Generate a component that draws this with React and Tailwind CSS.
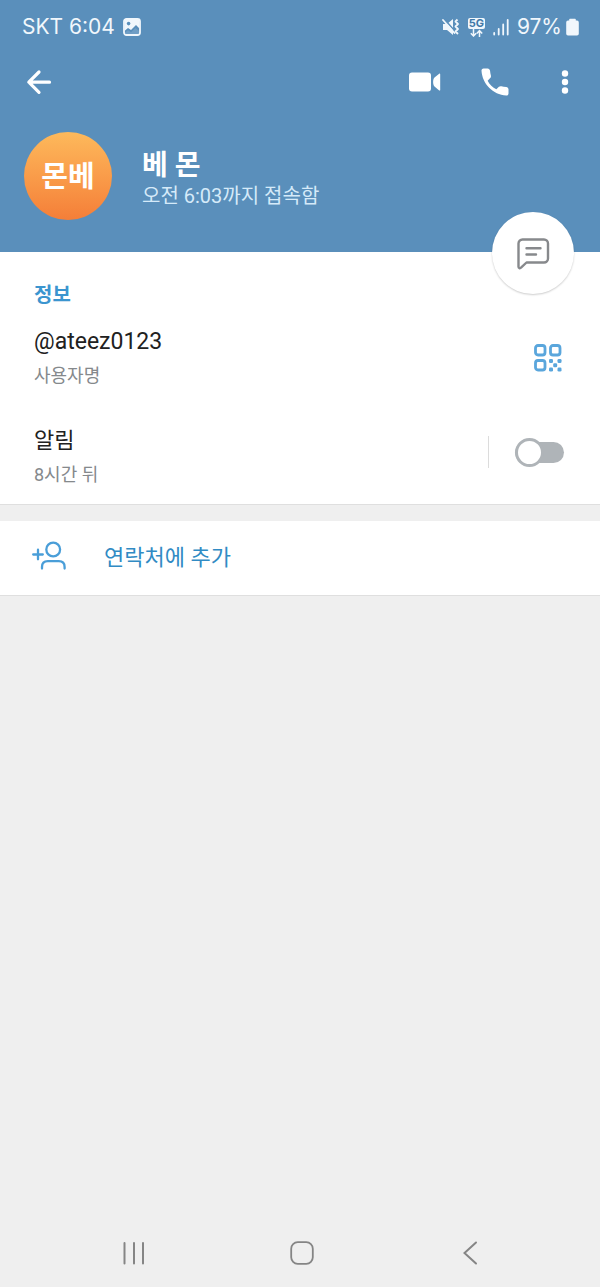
import React, { useState } from "react";

function ImageIcon() {
    return (
        <svg className="w-[18px] h-[18px]" viewBox="0 0 18 18" fill="none">
            <rect x="1" y="1" width="16" height="16" rx="2.5" stroke="currentColor" strokeWidth="1.8" />
            <path d="M1.500 1.500h15v9L13 7 8 12 5 10l-3.500 3z" fill="currentColor" />
            <circle cx="5.600" cy="5.600" r="1.800" fill="#5a8fbb" />
            <path d="M2 15.500v-2l3-2.700 2.700 2.200 4.800-5 3.500 3.500v4z" fill="#5a8fbb" />
            <path d="M2 14.500l3-2.200 3 2 4.500-4.200 3.500 3V16H2z" fill="currentColor" opacity=".15" />
        </svg>
    );
}

function MutedIcon() {
    return (
        <svg className="w-[18px] h-[18px]" viewBox="0 0 18 18" fill="none">
            <path d="M1 6h4l6-5v16l-6-5H1z" fill="currentColor" />
            <path d="M2 .8l11 12.400" stroke="#5a8fbb" strokeWidth="1.600" />
            <path d="M1 2l11.500 13" stroke="currentColor" strokeWidth="1.800" strokeLinecap="round" />
            <path
                d="M15.500 1.500l-2 2 2.500 2.500-2.500 2.500 2.500 2.500-2.500 2.500 2.500 2.500"
                stroke="currentColor"
                strokeWidth="1.800"
                strokeLinejoin="round"
            />
        </svg>
    );
}

function NetworkIcon() {
    return (
        <span className="flex flex-col items-center w-[17px]">
            <span className="w-full h-[11px] rounded-[2px] bg-[#f1f7fc] text-[#4079a8] text-[11px] leading-[11px] font-bold text-center">
                5G
            </span>
            <svg className="w-[13px] h-[8px]" viewBox="0 0 13 8" fill="none" stroke="currentColor" strokeWidth="1.500">
                <path d="M3.500 0v7M.8 4.200l2.700 2.800 2.700-2.800M9.500 8V1.500M6.800 4.400l2.700-2.800 2.700 2.800" />
            </svg>
        </span>
    );
}

function SignalIcon() {
    return (
        <svg className="w-[16px] h-[18px]" viewBox="0 0 16 18" fill="none" stroke="currentColor" strokeWidth="1.8" strokeLinecap="round">
            <path d="M1.2 15v1.500M5.700 11v5.500M10.200 6.500v10M14.700 2v14.500" />
        </svg>
    );
}

function BatteryIcon() {
    return (
        <svg className="w-[13px] h-[18px]" viewBox="0 0 13 18" fill="currentColor">
            <path d="M4 .8h5a.8.8 0 01.8.8v1H11a1.8 1.8 0 011.8 1.8v11.3a1.8 1.8 0 01-1.8 1.8H2A1.8 1.8 0 01.2 15.700V4.400A1.8 1.8 0 012 2.600h1.200v-1A.8.8 0 014 .8z" />
        </svg>
    );
}

function BackArrowIcon() {
    return (
        <svg className="w-[28px] h-[28px]" viewBox="0 0 28 28" fill="none" stroke="currentColor" strokeWidth="3.200" strokeLinecap="round" strokeLinejoin="round">
            <path d="M24.500 14.200H4M14 4L3.800 14.200 14 24.400" />
        </svg>
    );
}

function VideoIcon() {
    return (
        <svg className="w-[32px] h-[20px]" viewBox="0 0 32 20" fill="currentColor">
            <rect x="0" y=".5" width="22" height="19" rx="3" />
            <path d="M31.200 2.200v15.700c0 .6-.6.8-1 .5l-4.700-3.900c-1.800-1.500-1.800-7.400 0-8.900l4.700-3.900c.4-.3 1-.1 1 .5z" />
        </svg>
    );
}

function PhoneIcon() {
    return (
        <svg className="w-[36px] h-[36px]" viewBox="0 0 24 24" fill="currentColor">
            <path d="M19.500 15.300c-1.200-.1-2.300-.3-3.300-.5-.6-.1-1.200 0-1.600.4l-1.700 1.700c-2.500-1.300-4.500-3.300-5.800-5.800l1.700-1.700c.4-.4.600-1 .5-1.600-.3-1-.5-2.100-.6-3.300C8.600 3.700 7.900 3 7.100 3H4.400C3.500 3 2.900 3.700 3 4.500 3.600 13.400 10.600 20.400 19.500 21c.8.100 1.500-.6 1.500-1.400v-2.700c0-.8-.7-1.500-1.500-1.600z" />
        </svg>
    );
}

function DotsIcon() {
    return (
        <svg className="w-[8px] h-[26px]" viewBox="0 0 8 26" fill="currentColor">
            <circle cx="4" cy="4.500" r="3.200" />
            <circle cx="4" cy="13" r="3.200" />
            <circle cx="4" cy="21.500" r="3.200" />
        </svg>
    );
}

function MessageIcon() {
    return (
        <svg className="w-[34px] h-[34px]" viewBox="0 0 34 34" fill="none" stroke="currentColor" strokeWidth="2.400" strokeLinecap="round" strokeLinejoin="round">
            <path d="M6.500 3.500h21.500a4 4 0 014 4v15a4 4 0 01-4 4H10.500l-5.500 5.200c-1 .9-2.500.4-2.500-.9V7.500a4 4 0 014-4z" />
            <path d="M10.500 12.300h14M10.500 18.500h9.500" />
        </svg>
    );
}

function QrIcon() {
    return (
        <svg className="w-[28px] h-[28px]" viewBox="0 0 28 28" fill="none">
            <g stroke="currentColor" strokeWidth="2.800">
                <rect x="1.500" y="1.500" width="9.500" height="9.500" rx="2.500" />
                <rect x="16.500" y="1.500" width="9.500" height="9.500" rx="2.500" />
                <rect x="1.500" y="16.500" width="9.500" height="9.500" rx="2.500" />
            </g>
            <g fill="currentColor">
                <rect x="15" y="15" width="4" height="4" rx="1.300" />
                <rect x="23.500" y="15" width="4" height="4" rx="1.300" />
                <rect x="19.200" y="19.200" width="4" height="4" rx="1.300" />
                <rect x="15" y="23.500" width="4" height="4" rx="1.300" />
                <rect x="23.500" y="23.500" width="4" height="4" rx="1.300" />
            </g>
        </svg>
    );
}

function AddUserIcon() {
    return (
        <svg className="w-[36px] h-[30px]" viewBox="0 0 36 30" fill="none" stroke="currentColor" strokeWidth="2.300" strokeLinecap="round">
            <circle cx="21.200" cy="8.500" r="6.900" />
            <path d="M10 27.500v-1.500c0-3.700 2.300-5.800 5.800-5.800h11c3.500 0 5.800 2.100 5.800 5.800v1.500" />
            <path d="M1.200 13.500h9.600M6 8.700v9.600" />
        </svg>
    );
}

function Header() {
    return (
        <header className="relative bg-[#5a8fbb] text-white pb-8">
            <div className="flex items-center justify-between h-[54px] pl-[22px] pr-[21px] text-[#f1f7fc] text-[21px] font-[Inter,'Noto_Sans_CJK_KR',sans-serif]">
                <div className="flex items-center gap-2">
                    <span>SKT 6:04</span>
                    <ImageIcon />
                </div>
                <div className="flex items-center gap-2">
                    <MutedIcon />
                    <NetworkIcon />
                    <SignalIcon />
                    <div className="flex items-center gap-1">
                        <span>97%</span>
                        <BatteryIcon />
                    </div>
                </div>
            </div>

            <div className="flex items-center justify-between h-14 pl-[25px] pr-[31px]">
                <button type="button" aria-label="뒤로">
                    <BackArrowIcon />
                </button>
                <div className="flex items-center">
                    <button type="button" aria-label="영상 통화" className="mr-9">
                        <VideoIcon />
                    </button>
                    <button type="button" aria-label="전화" className="mr-12">
                        <PhoneIcon />
                    </button>
                    <button type="button" aria-label="더 보기">
                        <DotsIcon />
                    </button>
                </div>
            </div>

            <div className="flex items-center gap-[30px] pt-[22px] pl-6">
                <div className="flex items-center justify-center w-[88px] h-[88px] pt-1 rounded-full bg-linear-to-b from-[#fdb95b] to-[#f47e38] text-[29px] font-bold">
                    몬베
                </div>
                <div className="pt-1">
                    <h1 className="text-[28px] leading-9 font-bold">베 몬</h1>
                    <p className="text-[20px] leading-6 text-[#d5eaf9]">오전 6:03까지 접속함</p>
                </div>
            </div>

            <button
                type="button"
                aria-label="메시지 보내기"
                className="absolute right-[26px] -bottom-[42px] flex items-center justify-center w-[82px] h-[82px] rounded-full bg-white text-[#87898c] shadow-[0_1px_2px_rgba(0,0,0,0.2)]"
            >
                <MessageIcon />
            </button>
        </header>
    );
}

function InfoSection() {
    const [enabled, setEnabled] = useState(false);

    return (
        <section className="bg-white pt-[29px] border-b border-[#dfdfdf]">
            <h2 className="px-[34px] text-[20px] leading-7 font-bold text-[#3b95cf]">정보</h2>

            <div className="flex items-center justify-between h-[97px] pl-[34px] pr-[38px]">
                <div>
                    <p className="text-[23px] leading-8 text-[#212121]">@ateez0123</p>
                    <p className="mt-1 text-[18px] leading-7 text-[#85898c]">사용자명</p>
                </div>
                <button type="button" aria-label="QR 코드" className="text-[#5aa6dc]">
                    <QrIcon />
                </button>
            </div>

            <div className="flex items-center justify-between h-[98px] pl-[34px] pr-9">
                <div className="pt-1">
                    <p id="alert-label" className="text-[22px] leading-8 text-[#212121]">알림</p>
                    <p className="mt-1 text-[18px] leading-7 text-[#85898c]">8시간 뒤</p>
                </div>
                <div className="flex items-center gap-[26px] mb-1.5">
                    <span className="w-px h-8 bg-[#dcdcdc]" />
                    <label className="flex items-center w-[49px] h-[30px] cursor-pointer">
                        <input
                            type="checkbox"
                            role="switch"
                            aria-labelledby="alert-label"
                            className="peer sr-only"
                            checked={enabled}
                            onChange={(e) => setEnabled(e.target.checked)}
                        />
                        <span className="flex items-center w-full h-[21px] rounded-full bg-[#afb4b8] peer-checked:bg-[#5aa6dc] peer-checked:justify-end">
                            <span className="w-[29px] h-[29px] shrink-0 rounded-full border-3 border-[#afb4b8] bg-white" />
                        </span>
                    </label>
                </div>
            </div>
        </section>
    );
}

function NavBar() {
    return (
        <nav className="grid grid-cols-3 place-items-center h-[68px] mt-auto pl-[50px] pr-[46px] text-[#858585]">
            <button type="button" aria-label="최근 앱">
                <svg className="w-[24px] h-[24px]" viewBox="0 0 24 24" fill="none" stroke="currentColor" strokeWidth="2" strokeLinecap="round">
                    <path d="M2.500 2v20.500M12 2v20.500M21 2v20.500" />
                </svg>
            </button>
            <button type="button" aria-label="홈">
                <svg className="w-[24px] h-[24px]" viewBox="0 0 24 24" fill="none" stroke="currentColor" strokeWidth="1.800">
                    <rect x="1.200" y="1.200" width="21.600" height="21.600" rx="6.500" />
                </svg>
            </button>
            <button type="button" aria-label="뒤로 가기">
                <svg className="w-[24px] h-[24px]" viewBox="0 0 24 24" fill="none" stroke="currentColor" strokeWidth="2" strokeLinecap="round">
                    <path d="M18 1.500L6.500 12 18 22.500" />
                </svg>
            </button>
        </nav>
    );
}

export default function App() {
    return (
        <div className="flex flex-col min-h-screen bg-[#efefef] font-[Roboto,'Noto_Sans_CJK_KR',sans-serif]">
            <Header />
            <main>
                <InfoSection />
                <button
                    type="button"
                    className="flex items-center gap-9 w-full h-[75px] mt-4 pl-8 pb-1 bg-white border-b border-[#dfdfdf] text-left"
                >
                    <span className="text-[#4a9ed8]">
                        <AddUserIcon />
                    </span>
                    <span className="pt-1 text-[22px] leading-8 text-[#318bc4]">연락처에 추가</span>
                </button>
            </main>
            <NavBar />
        </div>
    );
}
